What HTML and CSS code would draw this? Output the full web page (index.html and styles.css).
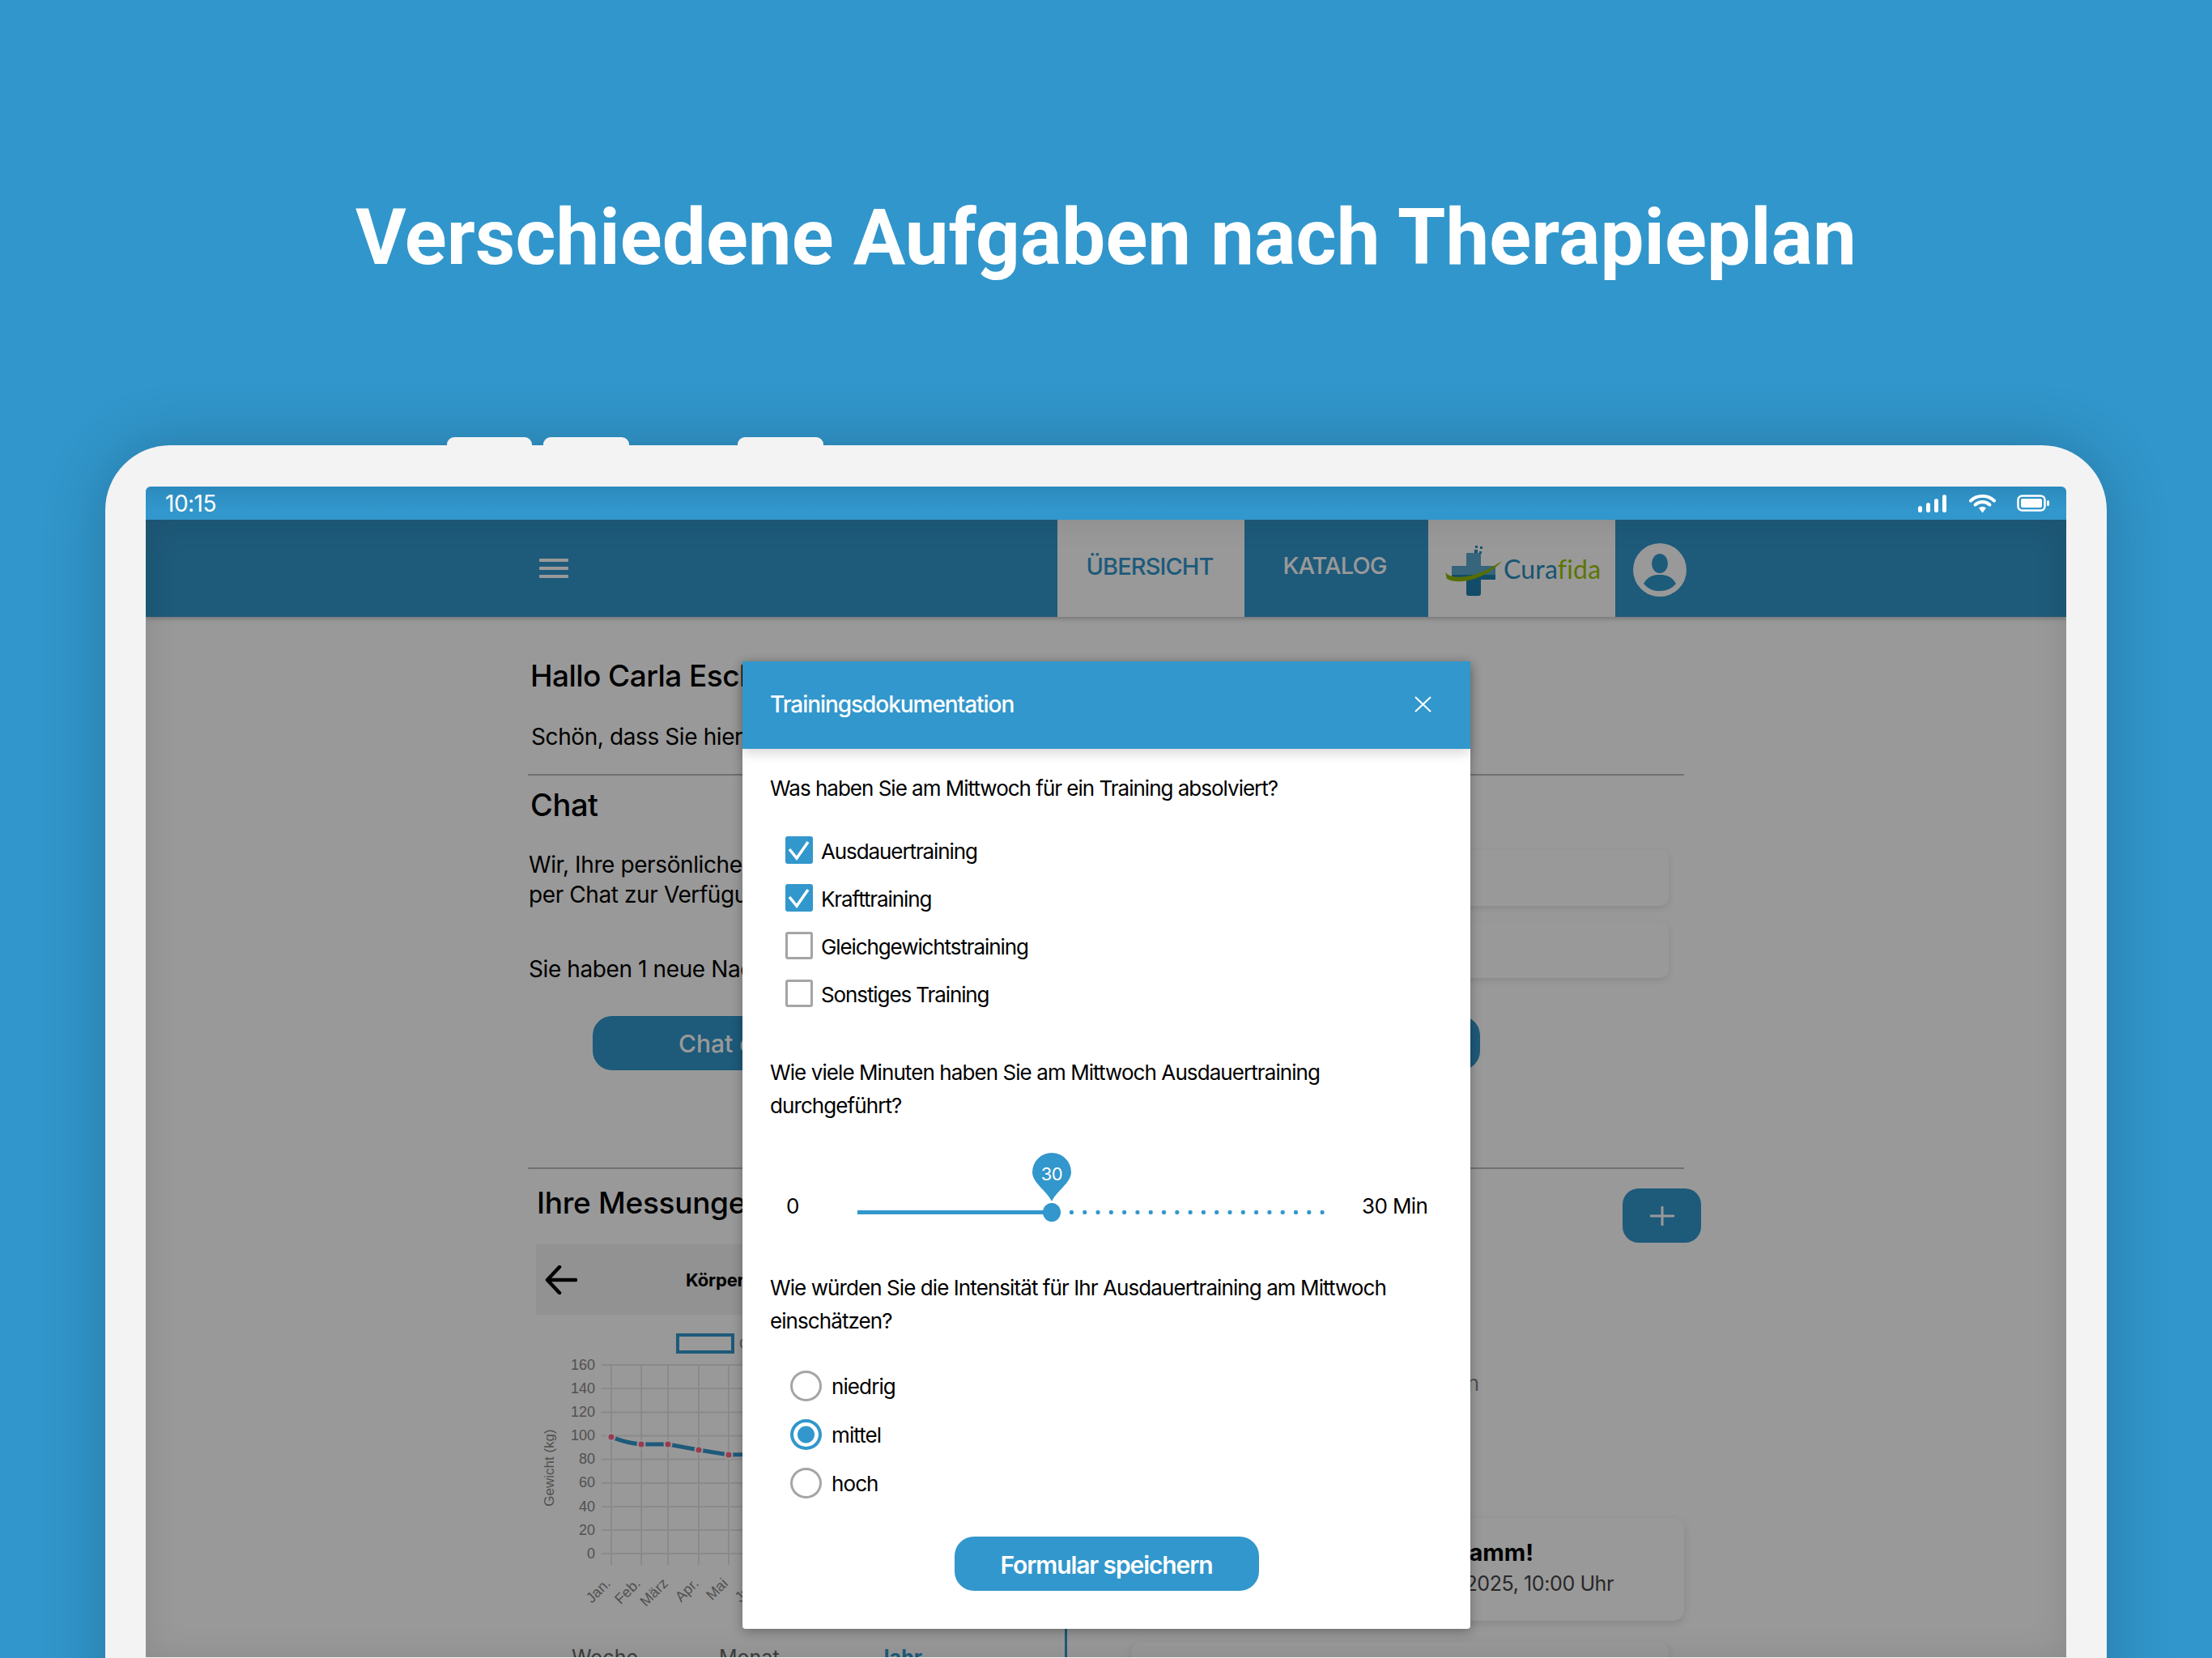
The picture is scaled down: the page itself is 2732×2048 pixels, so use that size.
FILE: index.html
```html
<!DOCTYPE html>
<html lang="de">
<head>
<meta charset="utf-8">
<title>Verschiedene Aufgaben nach Therapieplan</title>
<link rel="stylesheet" href="styles.css">
</head>
<body>
<h1 class="headline">Verschiedene Aufgaben nach Therapieplan</h1>
<div class="hw-buttons"><span class="hw hw-a"></span><span class="hw hw-b"></span><span class="hw hw-c"></span></div>
<div class="device">
  <div class="status">
    <span class="time">10:15</span>
    <div class="status-icons">
      <svg class="ic-signal" viewBox="0 0 35 22"><rect x="0" y="14" width="5" height="8" rx="2.500"/><rect x="10" y="10" width="5" height="12" rx="2.500"/><rect x="20" y="5" width="5" height="17" rx="2.500"/><rect x="30" y="0" width="5" height="22" rx="2.500"/></svg>
      <svg class="ic-wifi" viewBox="0 0 33 24"><path d="M2 8.500a21 21 0 0 1 29 0" fill="none" stroke="#fff" stroke-width="4" stroke-linecap="round"/><path d="M7.500 13.500a13 13 0 0 1 18 0" fill="none" stroke="#fff" stroke-width="4" stroke-linecap="round"/><path d="M12 17.500a7 7 0 0 1 9 0L16.500 23.500z"/></svg>
      <svg class="ic-battery" viewBox="0 0 40 21"><rect x="1.500" y="1.500" width="33" height="18" rx="5" fill="none" stroke="#fff" stroke-width="2.500"/><rect x="5" y="5" width="26" height="11" rx="2"/><rect x="37" y="7" width="3" height="7" rx="1.500"/></svg>
    </div>
  </div>
  <div class="app">
    <nav class="nav">
      <div class="burger"><i></i><i></i><i></i></div>
      <a class="tab tab-active">ÜBERSICHT</a>
      <a class="tab tab-katalog">KATALOG</a>
      <div class="tab-logo">
        <svg class="logo-mark" viewBox="0 0 70 62">
          <rect x="26" y="9" width="18" height="24" rx="1" fill="#5aa9cf"/>
          <rect x="26" y="30" width="18" height="32" rx="3" fill="#1f7fb0"/>
          <rect x="8" y="25" width="54" height="17" rx="1" fill="#5aa9cf"/>
          <rect x="8" y="36" width="54" height="6" fill="#1f7fb0"/>
          <path d="M0 33c8 9 34 10 70-14C52 40 18 50 2 41z" fill="#8fb700"/>
          <rect x="37" y="0" width="3" height="3" fill="#2a8cbc"/><rect x="43" y="1" width="3" height="3" fill="#2a8cbc"/><rect x="36" y="5" width="4" height="4" fill="#2a8cbc"/><rect x="42" y="7" width="3" height="3" fill="#2a8cbc"/>
        </svg>
        <span class="logo-word">Cura<b>fida</b></span>
      </div>
      <svg class="avatar" viewBox="0 0 66 66"><circle cx="33" cy="33" r="33" fill="#fff"/><ellipse cx="33" cy="25" rx="10" ry="12" fill="#2f98cc"/><path d="M13 50c5-9 12-11 20-11s15 2 20 11c-5 6-12 9-20 9s-15-3-20-9z" fill="#2f98cc"/></svg>
    </nav>
    <main class="page">
      <h2 class="greet">Hallo Carla Esch</h2>
      <p class="welcome">Schön, dass Sie hier sind</p>
      <hr class="rule rule-first">
      <h2 class="section-title">Chat</h2>
      <div class="chat-row">
        <div class="chat-text">
          <p class="para">Wir, Ihre persönlichen<br>per Chat zur Verfügung</p>
          <p class="para para-new">Sie haben 1 neue Nachricht</p>
        </div>
        <div class="chat-cards"><div class="soft-card"></div><div class="soft-card"></div></div>
      </div>
      <div class="chat-btn">Chat öffnen</div>
      <hr class="rule rule-second">
      <div class="measure-head">
        <h2 class="measure-title">Ihre Messungen</h2>
        <div class="plus-btn"><svg viewBox="0 0 30 24"><path d="M0 12h30M15 0v24" stroke="#fff" stroke-width="3" fill="none"/></svg></div>
      </div>
      <div class="measure-row">
        <div class="measure-left">
          <div class="back-bar">
            <svg class="back-arrow" viewBox="0 0 40 36"><path d="M38 18H3M18 2 3 18l15 16" fill="none" stroke="#000" stroke-width="4.500" stroke-linecap="round" stroke-linejoin="round"/></svg>
            <b class="back-title">Körpergewicht</b>
          </div>
          <svg class="chart" viewBox="662 1623 650 407">
            <rect class="legend-box" x="837" y="1648" width="68" height="21"/>
            <text class="legend-t" x="913" y="1665">Gewicht</text>
            <g class="grid">
              <path d="M743 1685H1020M743 1714H1020M743 1743.500H1020M743 1772.500H1020M743 1801.500H1020M743 1831H1020M743 1860H1020M743 1889H1020M743 1918H1020"/>
              <path d="M755 1685V1932M792 1685V1932M825 1685V1932M863 1685V1932M900 1685V1932M937 1685V1932"/>
            </g>
            <g class="ticks">
              <text x="735" y="1691">160</text><text x="735" y="1720">140</text><text x="735" y="1749">120</text><text x="735" y="1778">100</text><text x="735" y="1807">80</text><text x="735" y="1836">60</text><text x="735" y="1866">40</text><text x="735" y="1895">20</text><text x="735" y="1924">0</text>
            </g>
            <text class="axis-title" transform="translate(684 1812) rotate(-90)">Gewicht (kg)</text>
            <g class="months">
              <text transform="translate(755 1956) rotate(-45)">Jan.</text>
              <text transform="translate(792 1956) rotate(-45)">Feb.</text>
              <text transform="translate(826 1956) rotate(-45)">März</text>
              <text transform="translate(864 1956) rotate(-45)">Apr.</text>
              <text transform="translate(900 1956) rotate(-45)">Mai</text>
              <text transform="translate(938 1956) rotate(-45)">Juni</text>
            </g>
            <path class="series" d="M755 1774C768 1779 780 1782 792 1783H825L863 1790 900 1796 960 1795"/>
            <g class="points"><circle cx="755" cy="1774" r="4.500"/><circle cx="792" cy="1783" r="4.500"/><circle cx="825" cy="1783" r="4.500"/><circle cx="863" cy="1790" r="4.500"/><circle cx="900" cy="1796" r="4.500"/></g>
          </svg>
          <div class="range-tabs"><span>Woche</span><span>Monat</span><span class="range-on">Jahr</span></div>
        </div>
        <div class="measure-right">
          <p class="empty-note">Keine Messungen vorhanden</p>
          <div class="task-card">
            <b class="task-title">Neues Programm!</b>
            <span class="task-date">01.01.2025, 10:00 Uhr</span>
          </div>
          <div class="task-card task-card-next"></div>
        </div>
      </div>
    </main>
    <div class="scrim"></div>
    <section class="modal">
      <header class="modal-head">
        <span class="modal-title">Trainingsdokumentation</span>
        <svg class="modal-close" viewBox="0 0 21 20"><path d="M1 1l19 18M20 1 1 19" stroke="#fff" stroke-width="2" fill="none"/></svg>
      </header>
      <div class="modal-body">
        <p class="q">Was haben Sie am Mittwoch für ein Training absolviert?</p>
        <div class="checks">
          <label class="check"><span class="box box-on"><svg viewBox="0 0 34 34"><path d="M5 16l9 11L28 7" fill="none" stroke="#fff" stroke-width="3.500"/></svg></span>Ausdauertraining</label>
          <label class="check"><span class="box box-on"><svg viewBox="0 0 34 34"><path d="M5 16l9 11L28 7" fill="none" stroke="#fff" stroke-width="3.500"/></svg></span>Krafttraining</label>
          <label class="check"><span class="box"></span>Gleichgewichtstraining</label>
          <label class="check"><span class="box"></span>Sonstiges Training</label>
        </div>
        <p class="q q-two">Wie viele Minuten haben Sie am Mittwoch Ausdauertraining durchgeführt?</p>
        <div class="slider">
          <span class="slider-min">0</span>
          <div class="track">
            <span class="track-fill"></span>
            <span class="track-dots"></span>
            <span class="knob"></span>
            <span class="pin"><svg class="pin-shape" viewBox="0 0 48 60"><path d="M24 60C18 47 0 37 0 24a24 24 0 0 1 48 0C48 37 30 47 24 60z"/></svg><span class="pin-val">30</span></span>
          </div>
          <span class="slider-max">30 Min</span>
        </div>
        <p class="q q-three">Wie würden Sie die Intensität für Ihr Ausdauertraining am Mittwoch einschätzen?</p>
        <div class="radios">
          <label class="radio"><span class="dot"></span>niedrig</label>
          <label class="radio"><span class="dot dot-on"></span>mittel</label>
          <label class="radio"><span class="dot"></span>hoch</label>
        </div>
        <div class="save">Formular speichern</div>
      </div>
    </section>
  </div>
</div>
</body>
</html>
```
FILE: styles.css
```css
* { box-sizing: border-box; }
html, body { margin: 0; padding: 0; }
body {
  width: 2732px;
  height: 2048px;
  overflow: hidden;
  background: #3196cb;
  font-family: Inter, "Liberation Sans", sans-serif;
  color: #000;
}
p, h1, h2 { margin: 0; font-weight: 400; }

.headline {
  height: 540px;
  padding-top: 227px;
  text-align: center;
  font-family: Roboto, sans-serif;
  font-weight: 700;
  font-size: 96px;
  letter-spacing: .09px;
  line-height: 132px;
  color: #fff;
}

.hw-buttons { display: flex; height: 10px; padding-left: 552px; position: relative; z-index: 1; }
.hw { height: 12px; background: #f3f3f3; border-radius: 9px 9px 0 0; }
.hw-a { width: 105px; }
.hw-b { width: 106px; margin-left: 14px; }
.hw-c { width: 106px; margin-left: 134px; }

.device {
  margin: 0 130px;
  height: 1600px;
  padding: 51px 50px 0;
  background: #f3f3f3;
  border-radius: 80px 80px 0 0;
  box-shadow: 0 0 80px rgba(0, 0, 0, .2);
}

.status {
  height: 41px;
  padding: 0 21px 0 24px;
  display: flex;
  align-items: center;
  justify-content: space-between;
  background: linear-gradient(#2c8abd, #3297cc 70%);
  border-radius: 6px 6px 0 0;
  color: #fff;
}
.time { font-size: 28px; letter-spacing: -.5px; }
.status-icons { display: flex; align-items: center; fill: #fff; }
.ic-signal { width: 35px; height: 22px; }
.ic-wifi { width: 33px; height: 24px; margin-left: 28px; }
.ic-battery { width: 40px; height: 21px; margin-left: 26px; }

.app { position: relative; height: 1405px; overflow: hidden; background: #fff; }

.nav {
  height: 120px;
  display: flex;
  align-items: stretch;
  padding-left: 486px;
  background: #3297cc;
  box-shadow: 0 2px 6px rgba(0, 0, 0, .25);
  position: relative;
}
.burger { width: 36px; display: flex; flex-direction: column; justify-content: center; gap: 6px; margin-right: 604px; }
.burger i { display: block; height: 4px; background: #fff; border-radius: 1px; }
.tab {
  display: flex;
  align-items: center;
  justify-content: center;
  padding-bottom: 6px;
  width: 231px;
  font-size: 29px;
  letter-spacing: -.9px;
  font-weight: 500;
  color: #fff;
}
.tab-active { background: #fff; color: #3297cc; padding-right: 3px; }
.tab-katalog { width: 227px; padding-right: 4px; padding-bottom: 8px; }
.tab-logo { width: 231px; background: #fff; display: flex; align-items: center; position: relative; padding-left: 21px; }
.logo-mark { width: 70px; height: 62px; flex: none; margin-top: 6px; }
.logo-word { font-family: Lato, sans-serif; font-size: 32px; letter-spacing: .2px; color: #2a8cbc; margin-left: 2px; }
.logo-word b { font-weight: 400; color: #9bc400; }
.avatar { width: 66px; height: 66px; margin: 29px 0 0 22px; }

.page { padding: 52px 472px 0; }
.greet { font-size: 37px; line-height: 41px; letter-spacing: -.55px; font-weight: 500; margin-left: 3px; white-space: nowrap; }
.welcome { font-size: 28px; line-height: 41px; letter-spacing: -.4px; margin: 35px 0 0 4px; white-space: nowrap; }
.rule { border: 0; height: 2px; background: #bbb; margin: 0; }
.rule-first { margin-top: 25px; }
.section-title { font-size: 38px; line-height: 41px; letter-spacing: -.4px; font-weight: 500; margin: 16px 0 0 3px; }
.chat-row { display: flex; justify-content: space-between; margin-top: 35px; height: 166px; padding-right: 19px; padding-left: 1px; }
.chat-text { width: 600px; }
.para { font-size: 28px; line-height: 37px; letter-spacing: -.4px; white-space: nowrap; }
.para-new { margin-top: 55px; }
.chat-cards { width: 664px; display: flex; flex-direction: column; gap: 20px; }
.soft-card { height: 69px; background: #fff; border-radius: 10px; box-shadow: 0 3px 8px rgba(0, 0, 0, .1); }
.chat-btn {
  width: 1096px;
  height: 67px;
  margin: 39px 0 0 80px;
  padding-left: 106px;
  border-radius: 24px;
  background: #3297cc;
  color: #fff;
  font-size: 30px;
  line-height: 69px;
  font-weight: 500;
}
.rule-second { margin-top: 120px; }
.measure-head { display: flex; justify-content: space-between; width: 1449px; height: 93px; padding-left: 11px; }
.measure-title { font-size: 37px; line-height: 42px; letter-spacing: -.3px; font-weight: 500; margin-top: 21px; white-space: nowrap; }
.plus-btn { width: 97px; height: 67px; margin-top: 24px; border-radius: 20px; background: #3297cc; display: flex; align-items: center; justify-content: center; }
.plus-btn svg { width: 30px; height: 24px; }

.measure-row { display: flex; width: 1428px; }
.measure-left { width: 656px; margin-left: 10px; flex: none; border-right: 3px solid #3297cc; height: 520px; }
.back-bar { height: 87px; background: #f3f3f3; display: flex; align-items: center; }
.back-arrow { width: 40px; height: 36px; margin-left: 11px; }
.back-title { margin-left: 134px; font-size: 22px; letter-spacing: -.2px; }
.chart { display: block; width: 650px; height: 407px; }
.legend-box { fill: #fff; stroke: #3297cc; stroke-width: 4; }
.legend-t, .ticks text, .months text, .axis-title { font-family: "Liberation Sans", sans-serif; fill: #888; font-size: 18px; }
.ticks text { text-anchor: end; }
.months text { text-anchor: end; font-size: 18px; }
.axis-title { text-anchor: middle; font-size: 17px; }
.grid path { stroke: #e6e6e6; stroke-width: 2; fill: none; }
.series { fill: none; stroke: #3297cc; stroke-width: 5; }
.points circle { fill: #ff6384; stroke: #fff; stroke-width: 2; }
.range-tabs { display: flex; padding-left: 44px; font-size: 25px; line-height: 32px; color: #666; margin-top: 0; }
.range-tabs span:nth-child(1) { width: 182px; }
.range-tabs span:nth-child(2) { width: 196px; }
.range-on { color: #3297cc; font-weight: 700; }

.measure-right { margin-left: 79px; width: 683px; flex: none; }
.empty-note { font-size: 26px; line-height: 40px; color: #888; margin-top: 152px; padding-right: 253px; text-align: right; white-space: nowrap; }
.task-card {
  height: 127px;
  margin-top: 146px;
  padding: 24px 87px 0 0;
  background: #fff;
  border-radius: 14px;
  box-shadow: 0 4px 12px rgba(0, 0, 0, .12);
  display: flex;
  flex-direction: column;
  align-items: flex-end;
}
.task-title { font-size: 29px; line-height: 38px; margin-right: 99px; }
.task-date { font-size: 25px; line-height: 38px; letter-spacing: -.4px; color: #444; }
.task-card-next { margin: 26px 19px 0 0; }

.scrim { position: absolute; inset: 0; background: rgba(0, 0, 0, .4); box-shadow: inset 0 0 40px rgba(0, 0, 0, .1); }

.modal {
  position: absolute;
  left: 737px;
  top: 175px;
  width: 899px;
  height: 1195px;
  background: #fff;
  border-radius: 4px;
  box-shadow: 0 3px 14px rgba(0, 0, 0, .3);
  display: flex;
  flex-direction: column;
}
.modal-head {
  height: 108px;
  flex: none;
  padding: 0 48px 2px 34px;
  background: #3297cc;
  display: flex;
  align-items: center;
  justify-content: space-between;
  box-shadow: 0 5px 14px rgba(0, 0, 0, .16);
  position: relative;
}
.modal-title { font-size: 28px; letter-spacing: -1.05px; font-weight: 500; color: #fff; }
.modal-close { width: 21px; height: 20px; }
.modal-body { padding: 28px 34px 0; display: flex; flex-direction: column; }
.q { font-size: 26px; line-height: 41px; letter-spacing: -1px; }
.checks { margin: 41px 0 0 19px; display: flex; flex-direction: column; gap: 25px; }
.check { height: 34px; display: flex; align-items: center; font-size: 26px; letter-spacing: -1.1px; line-height: 38px; }
.box { width: 34px; height: 34px; margin-right: 10px; border: 3px solid #a5a5a5; border-radius: 3px; flex: none; margin-top: -5px; }
.box-on { background: #3297cc; border: 0; }
.box svg { display: block; width: 34px; height: 34px; }
.q-two { margin-top: 58px; letter-spacing: -.92px; }
.slider { display: grid; grid-template-columns: 88px 580px auto; margin-top: 83px; padding-left: 20px; font-size: 26px; line-height: 41px; letter-spacing: -.6px; }
.track { position: relative; align-self: center; height: 5px; margin-top: 16px; display: flex; }
.track-fill { width: 240px; background: #3297cc; }
.track-dots { flex: 1; background: radial-gradient(circle, #3297cc 2.4px, transparent 3px) 0 0 / 16.3px 5px repeat-x; }
.knob { position: absolute; left: 229px; top: -9px; width: 22px; height: 23px; border-radius: 50%; background: #3297cc; }
.pin { position: absolute; left: 216px; top: -71px; width: 48px; height: 60px; display: flex; justify-content: center; }
.pin-shape { position: absolute; left: 0; top: 0; width: 48px; height: 60px; fill: #3297cc; }
.pin-val { position: relative; font-size: 22px; line-height: 52px; letter-spacing: -.6px; color: #fff; }
.slider-max { margin-left: 43px; white-space: nowrap; }
.q-three { margin-top: 60px; letter-spacing: -.92px; }
.radios { margin: 42px 0 0 25px; display: flex; flex-direction: column; gap: 22px; }
.radio { height: 38px; display: flex; align-items: center; font-size: 26px; letter-spacing: -.9px; line-height: 48px; }
.dot { width: 39px; height: 38px; margin-right: 12px; border: 3px solid #a5a5a5; border-radius: 50%; flex: none; margin-top: -3px; }
.dot-on { border: 4px solid #3297cc; background: radial-gradient(circle, #3297cc 10px, #fff 11px); }
.save {
  align-self: center;
  width: 376px;
  height: 67px;
  margin-top: 46px;
  border-radius: 24px;
  background: #3297cc;
  color: #fff;
  text-align: center;
  font-size: 30px;
  font-weight: 600;
  letter-spacing: -1.1px;
  line-height: 70px;
}
```
